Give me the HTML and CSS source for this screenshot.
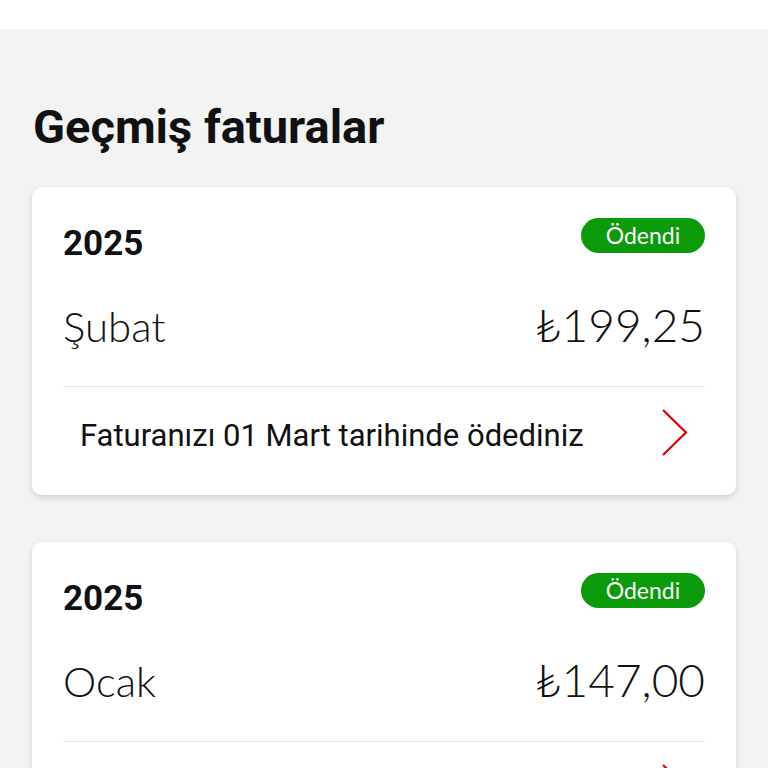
FILE: index.html
```html
<!DOCTYPE html>
<html lang="tr">
<head>
    <meta charset="UTF-8">
    <meta name="viewport" content="width=device-width, initial-scale=1.0">
    <title>Geçmiş faturalar</title>
    <link rel="stylesheet" href="styles.css">
</head>
<body>
    <div class="topbar"></div>
    <div class="page">
        <h1>Geçmiş faturalar</h1>

        <div class="card">
            <div class="card-head">
                <span class="year">2025</span>
                <span class="badge">Ödendi</span>
            </div>
            <div class="card-amount">
                <span class="month">Şubat</span>
                <span class="price">₺199,25</span>
            </div>
            <div class="divider"></div>
            <div class="card-foot">
                <span class="note">Faturanızı 01 Mart tarihinde ödediniz</span>
                <svg class="chevron" width="28" height="48" viewBox="0 0 28 48">
                    <path d="M2 1 L25 23.5 L2 46" fill="none" stroke="#d90000" stroke-width="2.2"/>
                </svg>
            </div>
        </div>

        <div class="card">
            <div class="card-head">
                <span class="year">2025</span>
                <span class="badge">Ödendi</span>
            </div>
            <div class="card-amount">
                <span class="month">Ocak</span>
                <span class="price">₺147,00</span>
            </div>
            <div class="divider"></div>
            <div class="card-foot">
                <span class="note">Faturanızı 01 Şubat tarihinde ödediniz</span>
                <svg class="chevron" width="28" height="48" viewBox="0 0 28 48">
                    <path d="M2 1 L25 23.5 L2 46" fill="none" stroke="#d90000" stroke-width="2.2"/>
                </svg>
            </div>
        </div>
    </div>
</body>
</html>
```
FILE: styles.css
```css
body {
    margin: 0;
    background-color: #f3f3f3;
    font-family: Roboto, "Liberation Sans", sans-serif;
    color: #111;
    overflow: hidden;
}
.topbar {
    height: 29px;
    background: #fff;
}
.page {
    padding: 0 32px;
}
h1 {
    margin: 70px 0 32px 1px;
    font-size: 47px;
    line-height: 56px;
    font-weight: 700;
}
.card {
    background: #fff;
    border-radius: 10px;
    box-shadow: 0 3px 6px rgba(0, 0, 0, 0.14);
    padding: 31px 31px 38px;
    margin-bottom: 47px;
}
.card-head {
    display: flex;
    justify-content: space-between;
    align-items: flex-start;
}
.year {
    margin-top: 8px;
    font-size: 35px;
    line-height: 35px;
    font-weight: 700;
}
.badge {
    width: 124px;
    height: 35px;
    line-height: 35px;
    border-radius: 18px;
    background: #0a9a0a;
    color: #fff;
    text-align: center;
    font-family: Lato, sans-serif;
    font-size: 23px;
}
.card-amount {
    display: flex;
    justify-content: space-between;
    align-items: baseline;
    margin-top: 38px;
    font-family: Lato, "DejaVu Sans", sans-serif;
    font-weight: 300;
    line-height: 52px;
}
.month {
    font-size: 42px;
}
.price {
    font-size: 46px;
}
.divider {
    height: 1px;
    margin-top: 34px;
    background: #e6e6e6;
}
.card-foot {
    display: flex;
    justify-content: space-between;
    align-items: center;
    padding: 28px 16px 0 17px;
}
.note {
    font-size: 31px;
    line-height: 36px;
}
.chevron {
    margin-top: -6px;
}
```
